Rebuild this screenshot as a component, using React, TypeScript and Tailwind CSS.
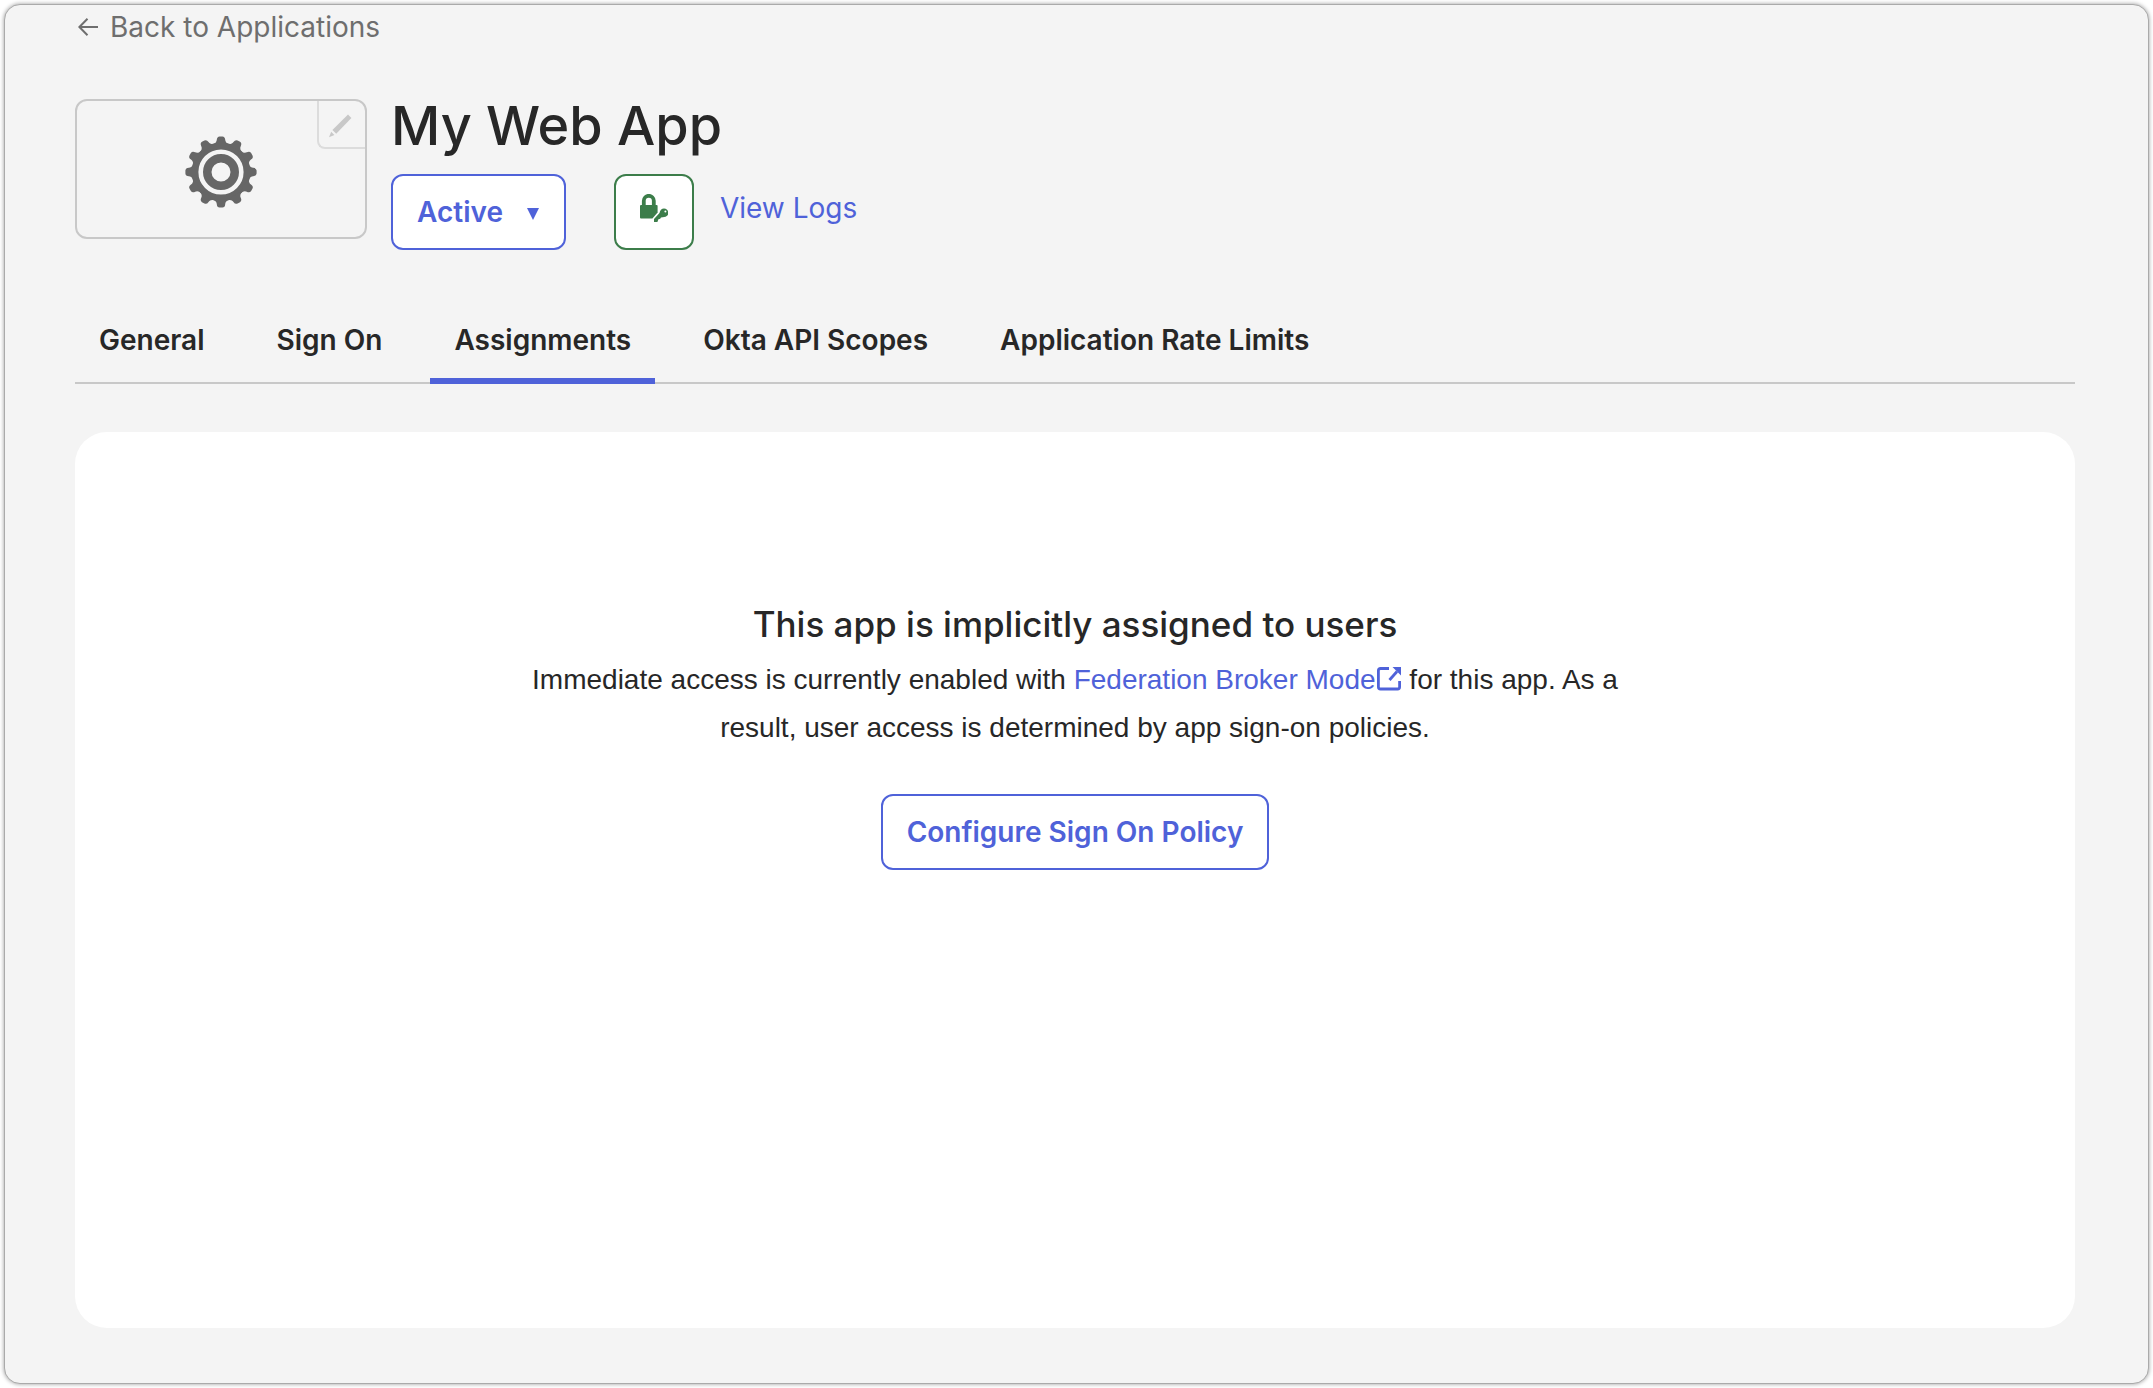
import React, { useState } from 'react';

const tabs = ['General', 'Sign On', 'Assignments', 'Okta API Scopes', 'Application Rate Limits'];

const GEAR_TEETH = [0, 30, 60, 90, 120, 150, 180, 210, 240, 270, 300, 330];

const GearIcon: React.FC = () => (
  <svg className="h-[72px] w-[72px] text-[#666666]" viewBox="0 0 72 72" fill="none" aria-hidden="true">
    <circle cx="36" cy="36" r="26" stroke="currentColor" strokeWidth="6.8" />
    <circle cx="36" cy="36" r="13.75" stroke="currentColor" strokeWidth="8.5" />
    {GEAR_TEETH.map((angle) => (
      <path
        key={angle}
        d="M27.5 9 Q31.8 6.5 31.8 3.8 Q32 0.6 34.6 0.4 H37.4 Q40 0.6 40.2 3.8 Q40.2 6.5 44.5 9 Z"
        fill="currentColor"
        transform={`rotate(${angle} 36 36)`}
      />
    ))}
  </svg>
);

const PencilIcon: React.FC = () => (
  <svg className="h-6 w-6" viewBox="0 0 24 24" fill="currentColor" aria-hidden="true">
    <path d="M20 0.6 L23.4 4 L8.2 19.8 L4.4 16 Z" />
    <path d="M3.2 17.8 L6.4 21 L1 23.2 Z" />
  </svg>
);

const LockKeyIcon: React.FC = () => (
  <svg className="h-7 w-7" viewBox="0 0 28 28" fill="none" aria-hidden="true">
    <path d="M3.8 12 V6.8 a5 5 0 0 1 10 0 V12" stroke="currentColor" strokeWidth="3.8" />
    <path
      d="M1 11 H16.6 Q17.6 11 17.6 12 V18.6 L12.4 24.6 H1 Q0 24.6 0 23.6 V12 Q0 11 1 11 Z"
      fill="currentColor"
    />
    <path d="M14 25 L20 18.6 L24.4 23 L21 23.4 L20.2 24.8 L18.4 25.2 L17.4 28 H14 Z" fill="currentColor" />
    <circle cx="24" cy="18.8" r="4.3" fill="currentColor" />
    <circle cx="25.4" cy="17.4" r="1" fill="white" />
  </svg>
);

const ExternalLinkIcon: React.FC = () => (
  <svg className="mx-px inline h-6 w-6 align-[-2px]" viewBox="0 0 24 24" fill="none" aria-hidden="true">
    <path
      d="M12 1.5 H3.5 Q1.4 1.5 1.4 3.6 V20 Q1.4 22 3.5 22 H20.6 Q22.6 22 22.6 20 V14"
      stroke="currentColor"
      strokeWidth="2.8"
    />
    <path d="M12.5 13 L20 4.5" stroke="currentColor" strokeWidth="2.8" />
    <path d="M15.5 0 H24 V8.5 Z" fill="currentColor" />
  </svg>
);

const BackArrowIcon: React.FC = () => (
  <svg className="h-5 w-5" viewBox="0 0 20 20" fill="none" stroke="currentColor" strokeWidth="2" aria-hidden="true">
    <path d="M20 10 H1.5 M9.5 1.8 L1.4 10 L9.5 18.2" />
  </svg>
);

export default function App() {
  const [activeTab, setActiveTab] = useState('Assignments');

  return (
    <div className="flex min-h-screen bg-white p-1 font-[Inter,sans-serif] text-[28px] leading-9 text-[#272727]">
      <main className="flex flex-1 flex-col rounded-2xl border border-[#aaaaaa] bg-[#f4f4f4] pr-[73px] pb-[55px] pl-[70px] shadow-[0_0_4px_rgba(0,0,0,0.4)]">
        <a href="#applications" className="mt-1 flex items-center gap-3 self-start pl-[3px] text-[#6e6e6e]">
          <BackArrowIcon />
          Back to Applications
        </a>

        {/* App header */}
        <header className="mt-[54px] flex gap-6">
          <div className="relative flex h-[140px] w-[292px] items-center justify-center rounded-xl border-2 border-[#c8c8c8] pt-1.5">
            <GearIcon />
            <button
              aria-label="Edit logo"
              className="absolute top-0 right-0 flex h-12 w-12 items-center justify-center rounded-bl-lg border-b-2 border-l-2 border-[#dcdcdc] pt-1 pr-1 text-[#c8c8c8]"
            >
              <PencilIcon />
            </button>
          </div>
          <div>
            <h1 className="text-[54px] leading-[54px] font-medium">My Web App</h1>
            <div className="mt-[21px] flex">
              <button className="flex h-[76px] items-center gap-6 rounded-xl border-2 border-[#4f62d9] bg-white pr-[25px] pl-6 font-semibold text-[#4f62d9]">
                Active
                <svg className="mt-1 h-3 w-3" viewBox="0 0 12 12" fill="currentColor" aria-hidden="true">
                  <path d="M0 0 H12 L6 12 Z" />
                </svg>
              </button>
              <button
                aria-label="App security"
                className="ml-12 flex h-[76px] w-20 justify-center rounded-xl border-2 border-[#3c7d4a] bg-white pt-[18px] text-[#3c7d4a]"
              >
                <LockKeyIcon />
              </button>
              <a href="#logs" className="mt-4 ml-[26px] text-[#4f62d9]">
                View Logs
              </a>
            </div>
          </div>
        </header>

        {/* Tabs */}
        <nav className="mt-16 flex gap-6 border-b-2 border-[#c8c8c8]">
          {tabs.map((tab) => (
            <button
              key={tab}
              onClick={() => setActiveTab(tab)}
              className={`-mb-0.5 border-b-6 px-6 pt-2 pb-5 font-semibold ${
                activeTab === tab ? 'border-[#4f62d9]' : 'border-transparent'
              }`}
            >
              {tab}
            </button>
          ))}
        </nav>

        <section className="mt-12 flex-1 rounded-[32px] bg-white px-10 pt-[168px] text-center">
          <h2 className="text-[35px] leading-12 font-medium">This app is implicitly assigned to users</h2>
          <p className="mx-auto mt-2 max-w-[1140px] font-['Liberation_Sans',sans-serif] leading-12">
            Immediate access is currently enabled with{' '}
            <a href="#federation-broker-mode" className="text-[#4f62d9]">
              Federation Broker Mode
              <ExternalLinkIcon />
            </a>{' '}
            for this app. As a result, user access is determined by app sign-on policies.
          </p>
          <button className="mt-[42px] h-[76px] rounded-xl border-2 border-[#4f62d9] bg-white px-6 font-semibold text-[#4f62d9]">
            Configure Sign On Policy
          </button>
        </section>
      </main>
    </div>
  );
}
